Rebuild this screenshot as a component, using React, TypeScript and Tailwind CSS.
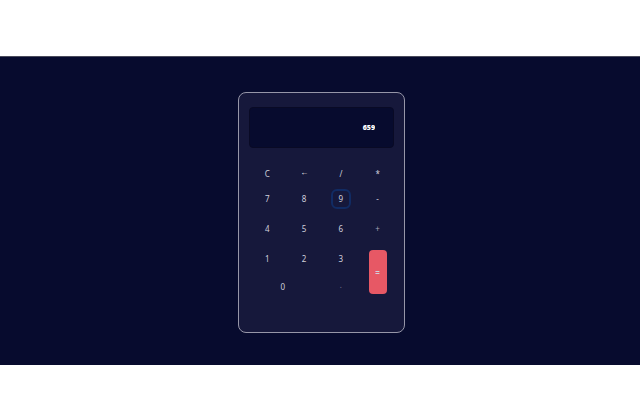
import { useState } from "react";

type Key = { label: string; name: string; className?: string };

const keys: Key[] = [
  { label: "C", name: "Clear" },
  { label: "←", name: "Backspace", className: "pb-0.5 font-['Liberation_Sans',sans-serif] text-white" },
  { label: "/", name: "Divide" },
  { label: "*", name: "Multiply" },
  { label: "7", name: "7" },
  { label: "8", name: "8" },
  { label: "9", name: "9" },
  { label: "-", name: "Subtract" },
  { label: "4", name: "4" },
  { label: "5", name: "5" },
  { label: "6", name: "6" },
  { label: "+", name: "Add", className: "text-[#a3a3b8]" },
  { label: "1", name: "1" },
  { label: "2", name: "2" },
  { label: "3", name: "3" },
  {
    label: "=",
    name: "Equals",
    className: "row-span-2 my-1.5 w-[18px] justify-self-center rounded bg-[#e75865] pt-0.5 font-semibold",
  },
  { label: "0", name: "0", className: "col-span-2 pr-1.5" },
  { label: ".", name: "Decimal point", className: "pb-1 text-[#77778f]" },
];

function evaluate(text: string): string {
  const tokens = text.match(/\d+\.?\d*|[-+*/]/g) ?? [];
  const values: number[] = [Number(tokens[0] ?? 0)];
  for (let i = 1; i + 1 < tokens.length; i += 2) {
    const n = Number(tokens[i + 1]);
    if (tokens[i] === "+") values.push(n);
    else if (tokens[i] === "-") values.push(-n);
    else if (tokens[i] === "*") values.push(values.pop()! * n);
    else values.push(values.pop()! / n);
  }
  return String(values.reduce((a, b) => a + b, 0));
}

export default function App() {
  const [value, setValue] = useState("659");
  const [active, setActive] = useState("9");

  const press = (label: string) => {
    setActive(label);
    if (label === "C") setValue("");
    else if (label === "←") setValue(value.slice(0, -1));
    else if (label === "=") setValue(evaluate(value));
    else setValue(value + label);
  };

  return (
    <div className="min-h-screen bg-white py-14 font-['Noto_Sans','Open_Sans',sans-serif]">
      <main className="flex justify-center border-t border-[#4a4b5c] bg-[#070b2e] pt-[35px] pb-8 pl-[3px]">
        <section
          aria-label="Calculator"
          className="w-[167px] rounded-lg border border-[#9696a8] bg-[#16183b] px-2.5 pt-3.5 pb-8"
        >
          <input
            aria-label="Result"
            readOnly
            value={value}
            className="block h-[41px] w-full rounded border border-[#090a25] bg-[#070b2e] pr-[18px] text-right font-['Open_Sans','Noto_Sans',sans-serif] text-[7px] font-extrabold text-white outline-none"
          />
          <div className="mt-[15px] -mr-0.5 grid grid-cols-4 grid-rows-[21px_30px_30px_30px_26px] text-[8px] leading-3 text-[#d0d0dc]">
            {keys.map((key) => (
              <button
                key={key.label}
                type="button"
                aria-label={key.name}
                onClick={() => press(key.label)}
                className={`flex items-center justify-center outline-none ${key.className ?? ""}`}
              >
                {key.label === active && key.label !== "=" ? (
                  <span className="flex size-5 items-center justify-center rounded-md border-2 border-[#112b63]">
                    {key.label}
                  </span>
                ) : (
                  key.label
                )}
              </button>
            ))}
          </div>
        </section>
      </main>
    </div>
  );
}
